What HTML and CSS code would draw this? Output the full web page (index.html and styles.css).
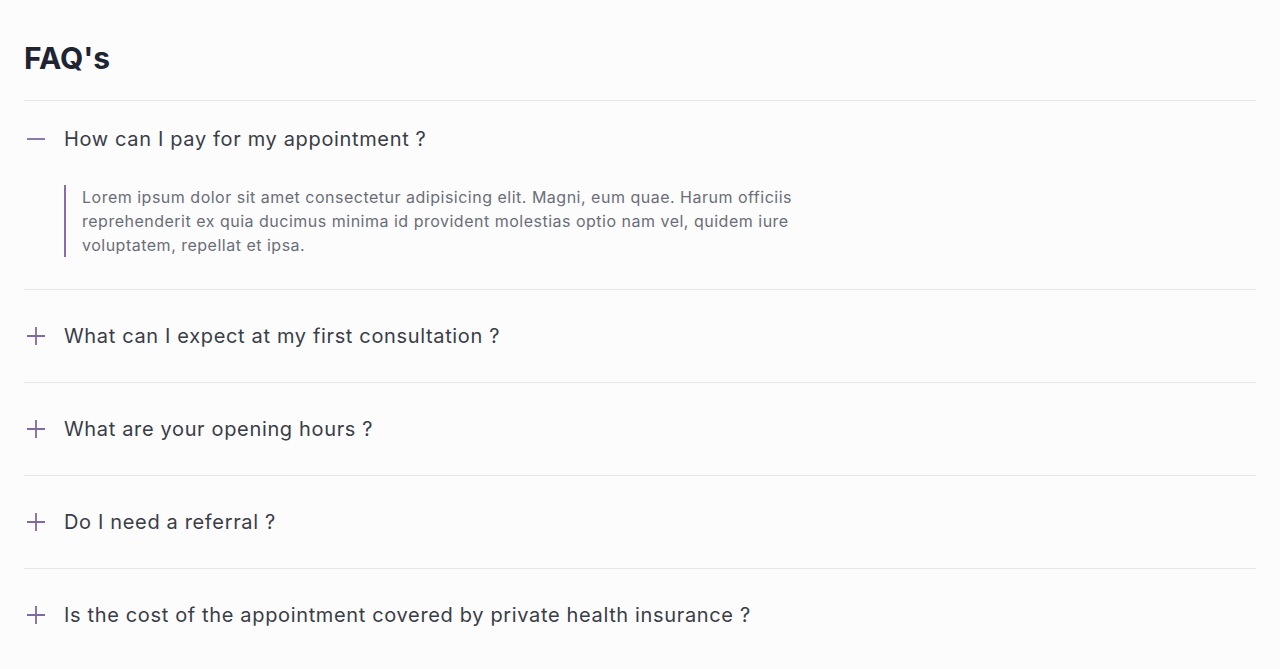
FILE: index.html
```html
<!DOCTYPE html>
<html lang="en">
<head>
<meta charset="utf-8">
<title>FAQ's</title>
<link rel="stylesheet" href="styles.css">
</head>
<body>
<section class="faq">
  <h1 class="faq-title">FAQ's</h1>
  <ul class="faq-list">
    <li class="faq-item is-open">
      <div class="faq-question">
        <svg class="faq-icon" viewBox="0 0 20 20"><path d="M1 10h18"/></svg>
        <span>How can I pay for my appointment ?</span>
      </div>
      <p class="faq-answer">Lorem ipsum dolor sit amet consectetur adipisicing elit. Magni, eum quae. Harum officiis reprehenderit ex quia ducimus minima id provident molestias optio nam vel, quidem iure voluptatem, repellat et ipsa.</p>
    </li>
    <li class="faq-item">
      <div class="faq-question">
        <svg class="faq-icon" viewBox="0 0 20 20"><path d="M1 10h18M10 1v18"/></svg>
        <span>What can I expect at my first consultation ?</span>
      </div>
    </li>
    <li class="faq-item">
      <div class="faq-question">
        <svg class="faq-icon" viewBox="0 0 20 20"><path d="M1 10h18M10 1v18"/></svg>
        <span>What are your opening hours ?</span>
      </div>
    </li>
    <li class="faq-item">
      <div class="faq-question">
        <svg class="faq-icon" viewBox="0 0 20 20"><path d="M1 10h18M10 1v18"/></svg>
        <span>Do I need a referral ?</span>
      </div>
    </li>
    <li class="faq-item">
      <div class="faq-question">
        <svg class="faq-icon" viewBox="0 0 20 20"><path d="M1 10h18M10 1v18"/></svg>
        <span>Is the cost of the appointment covered by private health insurance ?</span>
      </div>
    </li>
  </ul>
</section>
</body>
</html>
```
FILE: styles.css
```css
html, body {
  margin: 0;
  padding: 0;
  background: #fcfcfc;
  font-family: Inter, "Noto Sans", sans-serif;
}

.faq {
  padding: 0 24px;
}

.faq-title {
  margin: 0;
  padding: 40px 0 24px;
  font-size: 30px;
  line-height: 36px;
  font-weight: 700;
  color: #1f2433;
}

.faq-list {
  list-style: none;
  margin: 0;
  padding: 0;
}

.faq-item {
  padding: 32px 0;
  border-top: 1px solid #e6e6e8;
}

.faq-item.is-open {
  padding-top: 24px;
}

.faq-question {
  display: flex;
  align-items: center;
  gap: 18px;
  height: 28px;
  font-size: 20px;
  line-height: 28px;
  color: #3a3d48;
  letter-spacing: 0.65px;
}

.faq-icon {
  width: 20px;
  height: 20px;
  margin-left: 2px;
  fill: none;
  stroke: #7d6aa3;
  stroke-width: 1.8;
  flex: none;
}

.faq-answer {
  margin: 32px 0 0 40px;
  padding-left: 16px;
  max-width: 740px;
  border-left: 2px solid #8a6bb0;
  font-size: 16px;
  line-height: 24px;
  letter-spacing: 0.5px;
  color: #6b6e78;
}
```
